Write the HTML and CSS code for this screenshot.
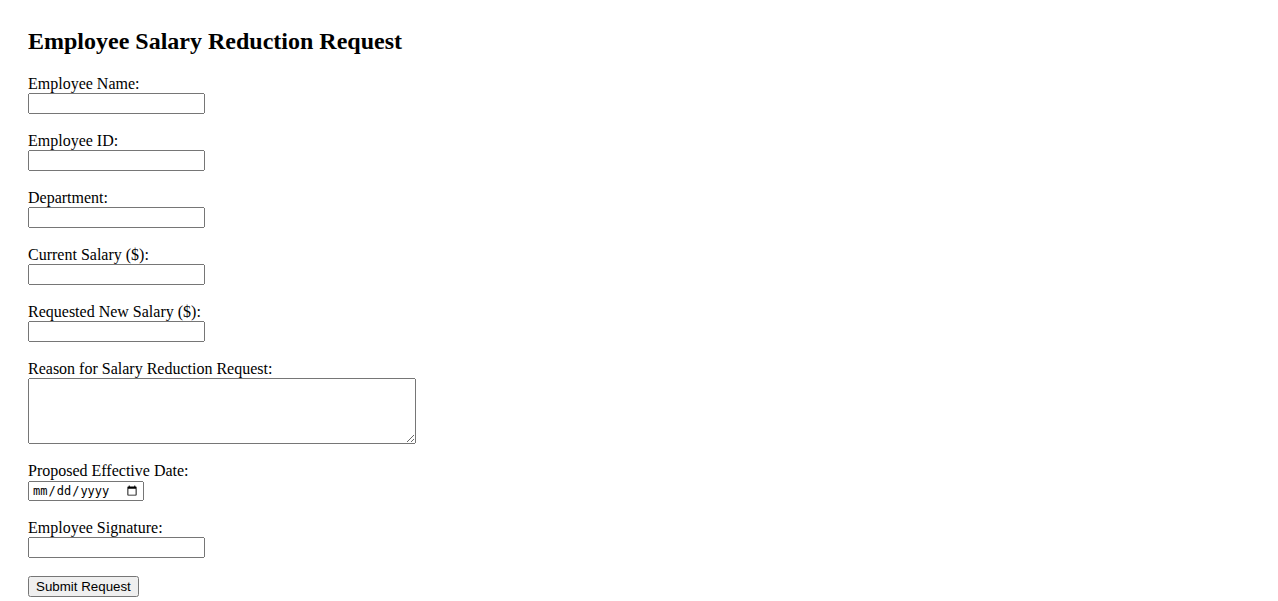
FILE: index.html
```html
<!DOCTYPE html>
<html lang="en">
<head>
<meta charset="utf-8">
<title>Employee Salary Reduction Request</title>
<link rel="stylesheet" href="styles.css">
</head>
<body>
<h2>Employee Salary Reduction Request</h2>
<form>
<label for="name">Employee Name:</label><br>
<input class="field" type="text" id="name" name="name"><br><br>
<label for="eid">Employee ID:</label><br>
<input class="field" type="text" id="eid" name="eid"><br><br>
<label for="dept">Department:</label><br>
<input class="field" type="text" id="dept" name="dept"><br><br>
<label for="cur">Current Salary ($):</label><br>
<input class="field" type="text" id="cur" name="cur"><br><br>
<label for="new">Requested New Salary ($):</label><br>
<input class="field" type="text" id="new" name="new"><br><br>
<label for="reason">Reason for Salary Reduction Request:</label><br>
<textarea class="reason" id="reason" name="reason" rows="4" cols="50"></textarea><br><br>
<label for="date">Proposed Effective Date:</label><br>
<input class="date" type="date" id="date" name="date"><br><br>
<label for="sig">Employee Signature:</label><br>
<input class="field" type="text" id="sig" name="sig"><br><br>
<input type="submit" value="Submit Request">
</form>
</body>
</html>
```
FILE: styles.css
```css
body {
  margin: 8px;
  padding: 20px;
  font-family: "Liberation Serif", "Times New Roman", serif;
  font-size: 16px;
  color: #000;
  background: #fff;
}
h2 {
  font-size: 24px;
  margin: 0 0 20px;
}
.field {
  box-sizing: border-box;
  width: 177px;
}
.reason {
  box-sizing: border-box;
  width: 388px;
  height: 66px;
  vertical-align: bottom;
}
.date {
  box-sizing: border-box;
  width: 116px;
  height: 20px;
  margin-top: 1px;
  padding: 0 2px;
  font-size: 12px;
  vertical-align: middle;
}
```
